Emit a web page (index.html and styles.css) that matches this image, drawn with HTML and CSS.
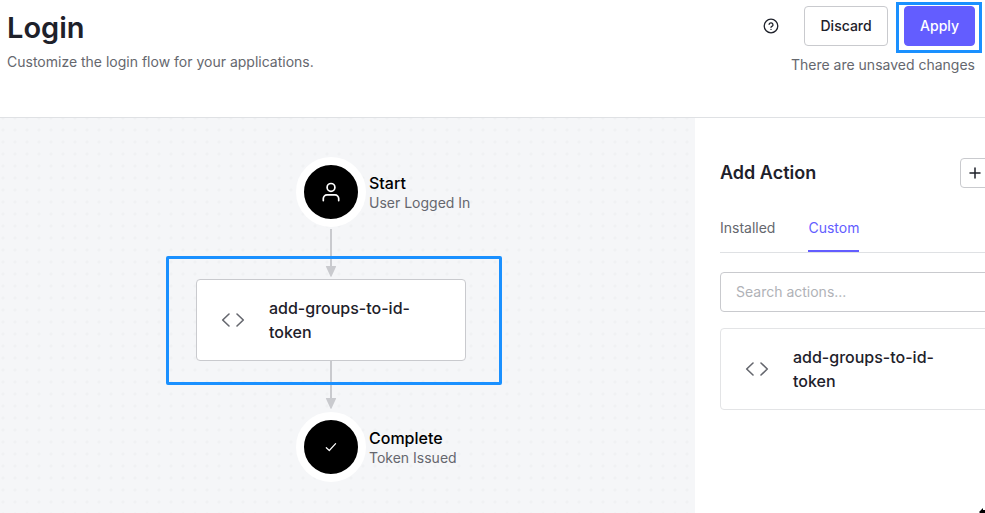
FILE: index.html
```html
<!DOCTYPE html>
<html lang="en">
<head>
<meta charset="utf-8">
<title>Login</title>
<link rel="stylesheet" href="styles.css">
</head>
<body>
<header class="page-header">
  <div class="heading">
    <h1>Login</h1>
    <p>Customize the login flow for your applications.</p>
  </div>
  <div class="header-side">
    <div class="actions">
      <button class="help" type="button" aria-label="Help">
        <svg width="16" height="16" viewBox="0 0 16 16" fill="none" stroke="currentColor" stroke-width="1.3" stroke-linecap="round" stroke-linejoin="round"><circle cx="8" cy="8" r="6.8"/><path d="M6.1 6.3a2 2 0 0 1 3.9.6c0 1.3-2 1.5-2 2.4"/><path d="M8 11.3v.1"/></svg>
      </button>
      <button class="button" type="button">Discard</button>
      <div class="apply-wrap"><button class="button primary" type="button">Apply</button></div>
    </div>
    <p class="status">There are unsaved changes</p>
  </div>
</header>
<main class="workspace">
  <section class="canvas">
    <div class="flow">
      <div class="node">
        <div class="disc">
          <svg width="20" height="20" viewBox="0 0 20 20" fill="none" stroke="currentColor" stroke-width="1.7" stroke-linecap="round" stroke-linejoin="round"><circle cx="10" cy="5.4" r="3.9"/><path d="M2.3 18.6v-2a3.7 3.7 0 0 1 3.7-3.7h8a3.7 3.7 0 0 1 3.7 3.7v2"/></svg>
        </div>
        <div class="node-text"><strong>Start</strong><span>User Logged In</span></div>
      </div>
      <svg class="arrow" width="12" height="48" viewBox="0 0 12 48"><path d="M5 0h2v40H5z"/><path d="M1.4 37h9.2q.8 0 .4.8L6.5 47.5q-.5.9-1 0L1 37.8q-.4-.8.4-.8z"/></svg>
      <div class="step">
        <div class="card">
          <svg width="24" height="24" viewBox="0 0 24 24" fill="none" stroke="currentColor" stroke-width="1.6" stroke-linecap="round" stroke-linejoin="round"><path d="M8 6l-6.3 6L8 18M16 6l6.3 6L16 18"/></svg>
          <span>add-groups-to-id-token</span>
        </div>
        <div class="highlight"></div>
      </div>
      <svg class="arrow" width="12" height="48" viewBox="0 0 12 48"><path d="M5 0h2v40H5z"/><path d="M1.4 37h9.2q.8 0 .4.8L6.5 47.5q-.5.9-1 0L1 37.8q-.4-.8.4-.8z"/></svg>
      <div class="node">
        <div class="disc">
          <svg width="12" height="12" viewBox="0 0 12 12" fill="none" stroke="currentColor" stroke-width="1.2" stroke-linecap="round" stroke-linejoin="round"><path d="M1.3 6.7l3 2.8 6.3-6.8"/></svg>
        </div>
        <div class="node-text"><strong>Complete</strong><span>Token Issued</span></div>
      </div>
    </div>
  </section>
  <aside class="panel">
    <div class="panel-body">
      <div class="panel-head">
        <h2>Add Action</h2>
        <button class="add" type="button" aria-label="Add">
          <svg width="12" height="12" viewBox="0 0 12 12" fill="none" stroke="currentColor" stroke-width="1.5" stroke-linecap="round"><path d="M6 1v10M1 6h10"/></svg>
        </button>
      </div>
      <nav class="tabs">
        <a href="#installed">Installed</a>
        <a class="active" href="#custom">Custom</a>
      </nav>
      <input class="search" type="text" placeholder="Search actions..." aria-label="Search actions">
      <div class="card soft">
        <svg width="24" height="24" viewBox="0 0 24 24" fill="none" stroke="currentColor" stroke-width="1.6" stroke-linecap="round" stroke-linejoin="round"><path d="M8 6l-6.3 6L8 18M16 6l6.3 6L16 18"/></svg>
        <span>add-groups-to-id-token</span>
      </div>
    </div>
  </aside>
</main>
<svg class="pointer" width="6" height="6" viewBox="0 0 6 6"><path d="M0 5l3-3 1-1v2h2v3H1z"/></svg>
</body>
</html>
```
FILE: styles.css
```css
* {
  box-sizing: border-box;
}

body {
  margin: 0;
  min-height: 100vh;
  display: flex;
  flex-direction: column;
  overflow: hidden;
  background: #fff;
  color: #1e212a;
  font: 14px/20px Inter, "Liberation Sans", sans-serif;
}

h1, h2, p {
  margin: 0;
}

button, input {
  font: inherit;
  color: inherit;
}

.page-header {
  display: flex;
  justify-content: space-between;
  height: 118px;
  padding: 6px 10px 0 7px;
  border-bottom: 1px solid #dfe1e4;
}

h1 {
  font-size: 29px;
  line-height: 44px;
  font-weight: 600;
}

.heading p, .status {
  color: #65676e;
}

.heading p {
  padding-top: 2px;
}

.actions {
  display: flex;
  align-items: center;
  gap: 16px;
}

.help {
  display: flex;
  margin-right: 9px;
  padding: 0;
  border: 0;
  background: none;
}

.button {
  display: block;
  height: 40px;
  min-width: 84px;
  padding: 0 15px;
  border: 1px solid #c9cace;
  border-radius: 4px;
  background: #fff;
  font-weight: 500;
}

.primary {
  min-width: 0;
  border-color: #635dff;
  background: #635dff;
  color: #fff;
}

.apply-wrap {
  position: relative;
}

.apply-wrap::after {
  content: "";
  position: absolute;
  inset: -4px -7px -7px -8px;
  border: 3px solid #1a90ff;
  pointer-events: none;
}

.status {
  padding-top: 9px;
  text-align: right;
}

.workspace {
  flex: 1;
  display: flex;
}

.canvas {
  flex: 1;
  padding: 39px 33px 31px 0;
  background: #f5f6f8 radial-gradient(circle, #f0f1f3 1px, transparent 2px) -3px -6px / 12px 12px;
}

.flow {
  display: flex;
  flex-direction: column;
  align-items: center;
  gap: 2px;
}

.node {
  display: grid;
  grid-template-columns: 100px 70px 100px;
  align-items: center;
}

.disc {
  grid-column: 2;
  display: grid;
  place-items: center;
  width: 70px;
  height: 70px;
  border: 8px solid #fff;
  border-radius: 50%;
  background: #000;
  color: #fff;
}

.node-text {
  display: flex;
  flex-direction: column;
  padding: 2px 0 0 3px;
  white-space: nowrap;
  color: #65676e;
}

.node-text strong {
  color: #000;
  font-size: 16px;
  font-weight: 500;
}

.arrow {
  display: block;
  fill: #c9cace;
}

.step {
  position: relative;
  margin-bottom: -2px;
}

.step + .arrow {
  margin-bottom: 1px;
}

.highlight {
  position: absolute;
  inset: -23px -36px -24px -30px;
  border: 3px solid #1a90ff;
  border-radius: 2px;
  pointer-events: none;
}

.card {
  display: flex;
  align-items: center;
  gap: 24px;
  width: 270px;
  padding: 16px 24px;
  border: 1px solid #c9cace;
  border-radius: 4px;
  background: #fff;
  font-size: 16px;
  line-height: 24px;
  font-weight: 500;
}

.card svg {
  flex: none;
  color: #65676e;
}

.card span {
  max-width: 160px;
}

.soft {
  border-color: #e3e4e6;
}

.panel {
  flex: 0 0 290px;
  padding: 40px 0 0 25px;
  overflow: hidden;
}

.panel-body {
  width: 270px;
}

.panel-head {
  display: flex;
  align-items: center;
  justify-content: space-between;
}

h2 {
  font-size: 18px;
  line-height: 28px;
  font-weight: 600;
}

.add {
  display: grid;
  place-items: center;
  width: 30px;
  height: 30px;
  padding: 0;
  border: 1px solid #c9cace;
  border-radius: 4px;
  background: #fff;
}

.tabs {
  display: flex;
  gap: 33px;
  margin: 30px 0 19px;
  border-bottom: 1px solid #dfe1e4;
}

.tabs a {
  padding-bottom: 12px;
  border-bottom: 2px solid transparent;
  color: #65676e;
  text-decoration: none;
}

.tabs .active {
  border-color: #635dff;
  color: #635dff;
}

.search {
  display: block;
  width: 100%;
  height: 40px;
  margin-bottom: 16px;
  padding: 0 15px 2px;
  border: 1px solid #c9cace;
  border-radius: 4px;
}

.search::placeholder {
  color: #b0b2b7;
}

.pointer {
  position: absolute;
  right: 0;
  bottom: 0;
}
```
